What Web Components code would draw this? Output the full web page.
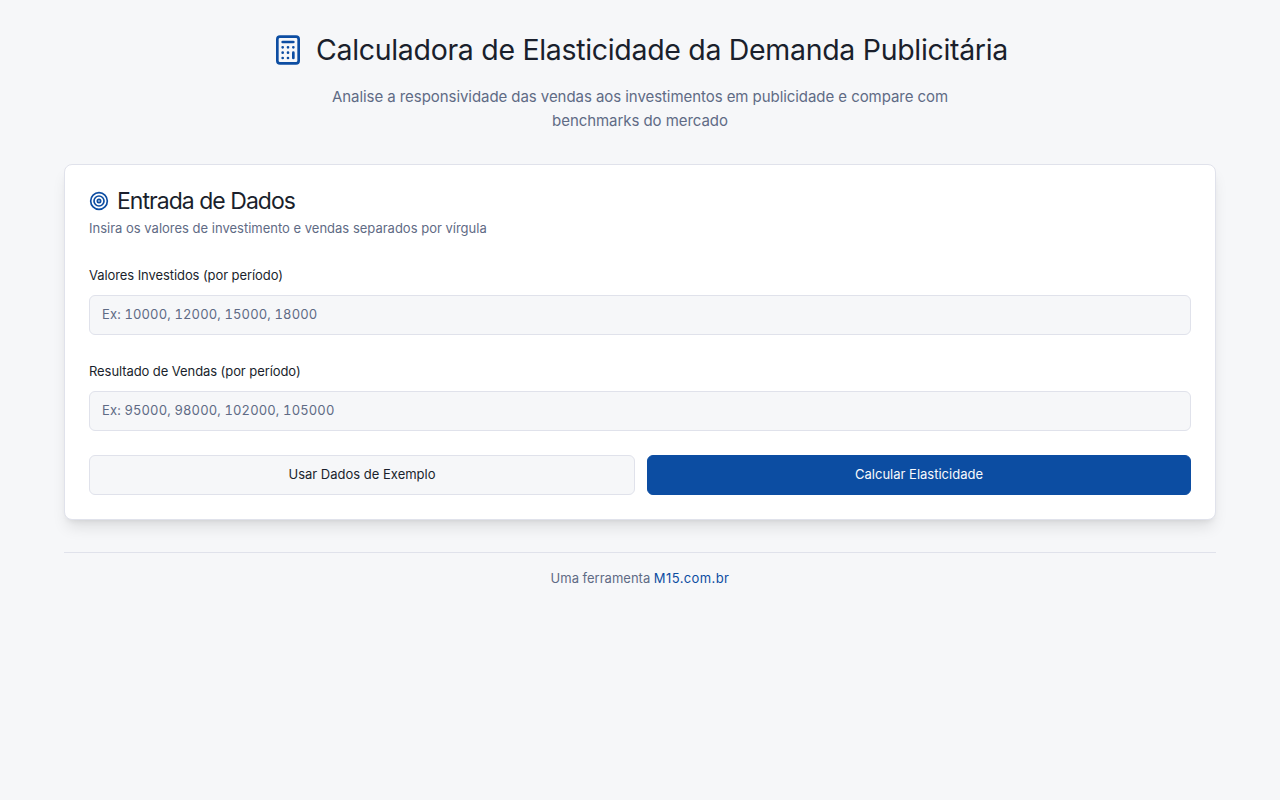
<!DOCTYPE html>
<html lang="pt-BR">
<head>
<meta charset="utf-8">
<title>Calculadora de Elasticidade</title>
<style>
  html, body { margin: 0; background: #f6f7f9; }
  body { font-family: Inter, "Liberation Sans", sans-serif; color: #1a1f2c; }
</style>
</head>
<body>
<elastic-app>
  <page-header>
    <span slot="title">Calculadora de Elasticidade da Demanda Publicitária</span>
    Analise a responsividade das vendas aos investimentos em publicidade e compare com benchmarks do mercado
  </page-header>
  <data-card>
    <span slot="title">Entrada de Dados</span>
    <span slot="subtitle">Insira os valores de investimento e vendas separados por vírgula</span>
    <field-row label="Valores Investidos (por período)" placeholder="Ex: 10000, 12000, 15000, 18000"></field-row>
    <field-row label="Resultado de Vendas (por período)" placeholder="Ex: 95000, 98000, 102000, 105000"></field-row>
    <div slot="actions" style="display:grid;grid-template-columns:546fr 544fr;gap:12px">
      <app-button>Usar Dados de Exemplo</app-button>
      <app-button primary>Calcular Elasticidade</app-button>
    </div>
  </data-card>
  <page-footer></page-footer>
</elastic-app>

<script>
class ElasticApp extends HTMLElement {
  constructor() {
    super();
    this.attachShadow({ mode: "open" });
    this.shadowRoot.innerHTML = `
      <style>
        :host { display: block; max-width: 1152px; margin: 0 auto; padding: 32px 0; }
      </style>
      <slot></slot>`;
  }
}

class PageHeader extends HTMLElement {
  constructor() {
    super();
    this.attachShadow({ mode: "open" });
    this.shadowRoot.innerHTML = `
      <style>
        :host { display: block; text-align: center; margin-bottom: 31px; }
        h1 {
          display: flex; align-items: center; justify-content: center; gap: 12px;
          margin: 0 0 17px; font-size: 28.5px; line-height: 36px; font-weight: 400;
          letter-spacing: -0.316px; color: #1a1f2c;
        }
        svg { width: 32px; height: 32px; color: #0c4da2; flex: none; }
        p { margin: 0 auto; max-width: 672px; font-size: 15px; line-height: 24px; letter-spacing: -0.06px; color: #5f6b85; }
      </style>
      <h1>
        <svg viewBox="0 0 24 24" fill="none" stroke="currentColor" stroke-width="2" stroke-linecap="round" stroke-linejoin="round">
          <rect width="16" height="20" x="4" y="2" rx="2"/>
          <line x1="8" x2="16" y1="6" y2="6"/>
          <line x1="16" x2="16" y1="14" y2="18"/>
          <path d="M16 10h.01M12 10h.01M8 10h.01M12 14h.01M8 14h.01M12 18h.01M8 18h.01"/>
        </svg>
        <slot name="title"></slot>
      </h1>
      <p><slot></slot></p>`;
  }
}

class DataCard extends HTMLElement {
  constructor() {
    super();
    this.attachShadow({ mode: "open" });
    this.shadowRoot.innerHTML = `
      <style>
        :host {
          display: block; box-sizing: border-box; padding: 24px; background: #fff;
          border: 1px solid #e0e2eb; border-radius: 8px;
          box-shadow: 0 10px 15px -3px rgba(0,0,0,.1), 0 4px 6px -4px rgba(0,0,0,.1);
        }
        h2 {
          display: flex; align-items: center; gap: 8px; margin: 0;
          font-size: 23px; line-height: 24px; font-weight: 400; letter-spacing: -0.97px; color: #1a1f2c;
        }
        svg { width: 20px; height: 20px; color: #0c4da2; flex: none; }
        p { margin: 5px 0 25px; font-size: 13px; line-height: 20px; color: #5f6b85; }
        .fields { display: grid; gap: 24px; margin-bottom: 24px; }
      </style>
      <h2>
        <svg viewBox="0 0 24 24" fill="none" stroke="currentColor" stroke-width="2" stroke-linecap="round" stroke-linejoin="round">
          <circle cx="12" cy="12" r="10"/><circle cx="12" cy="12" r="6"/><circle cx="12" cy="12" r="2"/>
        </svg>
        <slot name="title"></slot>
      </h2>
      <p><slot name="subtitle"></slot></p>
      <div class="fields"><slot></slot></div>
      <slot name="actions"></slot>`;
  }
}

class FieldRow extends HTMLElement {
  constructor() {
    super();
    this.attachShadow({ mode: "open" });
    this.shadowRoot.innerHTML = `
      <style>
        :host { display: block; }
        label { display: block; margin-bottom: 8px; font-size: 13px; line-height: 24px; letter-spacing: -0.08px; color: #1a1f2c; }
        input {
          display: block; box-sizing: border-box; width: 100%; height: 40px; padding: 7px 12px 9px;
          font: 13px/20px Inter, "Liberation Sans", sans-serif; font-feature-settings: "tnum"; letter-spacing: 0.13px;
          color: #1a1f2c; background: #f6f7f9; border: 1px solid #e0e2eb; border-radius: 6px; outline: none;
        }
        input::placeholder { color: #5f6b85; opacity: 1; }
      </style>
      <label></label>
      <input type="text">`;
    this.shadowRoot.querySelector("label").textContent = this.getAttribute("label");
    this.shadowRoot.querySelector("input").placeholder = this.getAttribute("placeholder");
  }
}

class AppButton extends HTMLElement {
  constructor() {
    super();
    this.attachShadow({ mode: "open" });
    this.shadowRoot.innerHTML = `
      <style>
        :host { display: block; }
        button {
          display: block; box-sizing: border-box; width: 100%; height: 40px; padding: 7px 16px 9px;
          font: 13px/20px Inter, "Liberation Sans", sans-serif; color: #1a1f2c;
          background: #f6f7f9; border: 1px solid #e0e2eb; border-radius: 6px;
        }
        :host([primary]) button { background: #0c4da2; border-color: #0c4da2; color: #f8fafc; }
      </style>
      <button type="button"><slot></slot></button>`;
  }
}

class PageFooter extends HTMLElement {
  constructor() {
    super();
    this.attachShadow({ mode: "open" });
    this.shadowRoot.innerHTML = `
      <style>
        :host {
          display: block; margin-top: 32px; padding-top: 15px; border-top: 1px solid #e0e2eb;
          text-align: center; font-size: 13px; line-height: 20px; color: #5f6b85;
        }
        a { color: #0c4da2; text-decoration: none; letter-spacing: 0.4px; }
      </style>
      Uma ferramenta <a href="#">M15.com.br</a>`;
  }
}

customElements.define("elastic-app", ElasticApp);
customElements.define("page-header", PageHeader);
customElements.define("data-card", DataCard);
customElements.define("field-row", FieldRow);
customElements.define("app-button", AppButton);
customElements.define("page-footer", PageFooter);
</script>
</body>
</html>
